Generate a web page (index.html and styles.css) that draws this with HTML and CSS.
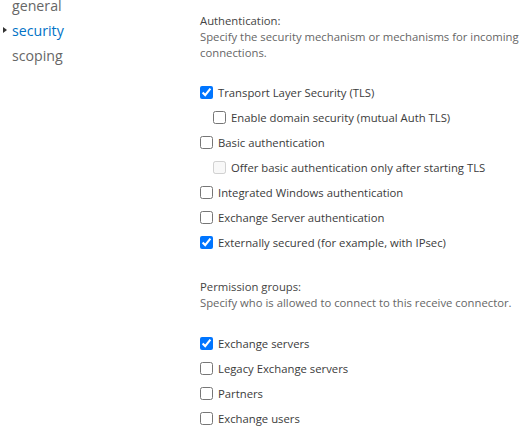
FILE: index.html
```html
<!DOCTYPE html>
<html>
<head>
<meta charset="utf-8">
<link rel="stylesheet" href="styles.css">
</head>
<body>
<div class="page">
  <nav class="nav">
    <div class="nav-item">general</div>
    <div class="nav-item active"><span class="caret"></span>security</div>
    <div class="nav-item">scoping</div>
  </nav>
  <main class="content">
    <section class="group">
      <div class="label">Authentication:</div>
      <div class="desc">Specify the security mechanism or mechanisms for incoming<br>connections.</div>
      <div class="checks">
        <label class="check"><input type="checkbox" checked><span>Transport Layer Security (TLS)</span></label>
        <label class="check sub"><input type="checkbox"><span>Enable domain security (mutual Auth TLS)</span></label>
        <label class="check"><input type="checkbox"><span>Basic authentication</span></label>
        <label class="check sub disabled"><input type="checkbox" disabled><span>Offer basic authentication only after starting TLS</span></label>
        <label class="check"><input type="checkbox"><span>Integrated Windows authentication</span></label>
        <label class="check"><input type="checkbox"><span>Exchange Server authentication</span></label>
        <label class="check"><input type="checkbox" checked><span>Externally secured (for example, with IPsec)</span></label>
      </div>
    </section>
    <section class="group perms">
      <div class="label">Permission groups:</div>
      <div class="desc">Specify who is allowed to connect to this receive connector.</div>
      <div class="checks">
        <label class="check"><input type="checkbox" checked><span>Exchange servers</span></label>
        <label class="check"><input type="checkbox"><span>Legacy Exchange servers</span></label>
        <label class="check"><input type="checkbox"><span>Partners</span></label>
        <label class="check"><input type="checkbox"><span>Exchange users</span></label>
      </div>
    </section>
  </main>
</div>
</body>
</html>
```

FILE: styles.css
```css
html, body {
  margin: 0;
  padding: 0;
  background: #fff;
}
body {
  font-family: "Open Sans", "Segoe UI", sans-serif;
  color: #333;
  overflow: hidden;
}
.page {
  display: flex;
  margin-top: -7px;
}
.nav {
  width: 200px;
  flex: none;
  display: flex;
  flex-direction: column;
}
.nav-item {
  position: relative;
  padding-left: 12px;
  font-size: 14.2px;
  line-height: 25px;
  color: #666;
}
.nav-item.active {
  color: #0072c6;
}
.caret {
  position: absolute;
  left: 3px;
  top: 9px;
  width: 0;
  height: 0;
  border-top: 3.5px solid transparent;
  border-bottom: 3.5px solid transparent;
  border-left: 4px solid #333;
}
.content {
  flex: 1;
  padding-top: 20px;
  font-size: 11.3px;
}
.group {
  display: flex;
  flex-direction: column;
}
.group + .group {
  margin-top: 24px;
}
.label {
  line-height: 16px;
  color: #444;
}
.desc {
  line-height: 16px;
  color: #666;
  white-space: nowrap;
}
.checks {
  margin-top: 19px;
  display: flex;
  flex-direction: column;
}
.perms .checks {
  margin-top: 20px;
}
.check {
  display: flex;
  align-items: center;
  height: 25px;
  color: #3b3b3b;
}
.check input {
  margin: 0 5px 0 0;
  width: 13px;
  height: 13px;
}
.check.sub {
  padding-left: 13px;
}
```
